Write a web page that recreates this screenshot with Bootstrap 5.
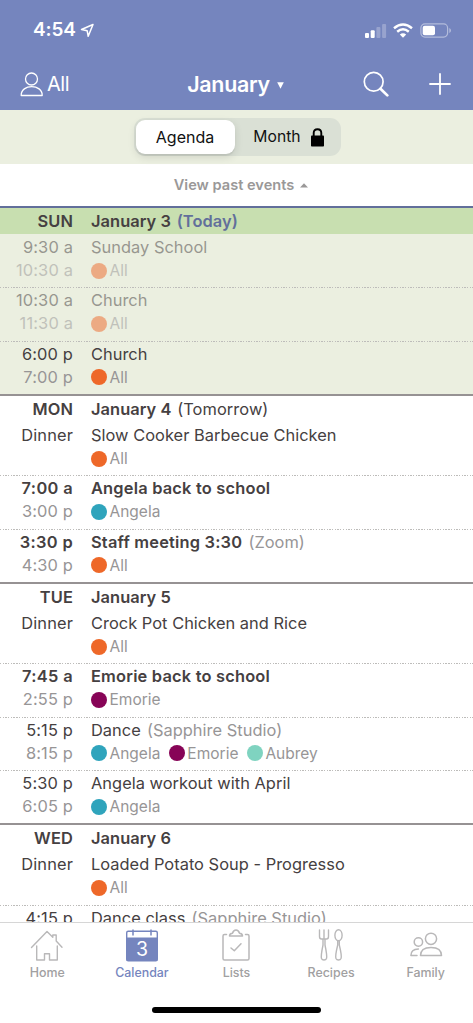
<!DOCTYPE html>
<html lang="en">
<head>
<meta charset="utf-8">
<meta name="viewport" content="width=device-width, initial-scale=1">
<title>Calendar</title>
<link href="https://cdn.jsdelivr.net/npm/bootstrap@5.3.0/dist/css/bootstrap.min.css" rel="stylesheet">
<style>
  body{font-family:Inter,"Liberation Sans",sans-serif;color:#454041;font-size:16.4px;overflow:hidden}
  svg{display:block;flex:none}
  .screen{height:1023px}
  .topbar{height:110px;background:#7585be;color:#fff}
  .status{height:60px;padding:1px 22px 0 33px}
  .clock{font-size:19px;font-weight:600;letter-spacing:-.15px}
  .titlebar{height:48px;padding:0 22px 0 20px;display:grid;grid-template-columns:1fr auto 1fr}
  .who{font-size:20px;letter-spacing:-.5px}
  .month-name{font-size:21.4px;font-weight:600;letter-spacing:-.3px}
  .segwrap{height:54px;background:#ebefe0}
  .seg{width:207px;height:38px;border-radius:11px;background:#dae0d5;color:#111;padding:2px;font-size:16px}
  .seg .on{width:99px;background:#fff;border-radius:9px;box-shadow:0 3px 8px rgba(0,0,0,.12),0 2px 1px rgba(0,0,0,.05)}
  .past{height:42px;font-size:14.6px;font-weight:600;color:#9a9898;padding:1px 0 0 7px}
  .day{border-top:2px solid #969293}
  .day.today{border-color:#626f9b;background:#ebefe0}
  .dayhead{height:26px;line-height:26px;font-weight:600;letter-spacing:.07px}
  .dayhead .what span{margin-left:1.5px}
  .today .dayhead{background:#c8dfb0}
  .when{width:73px;flex:none;text-align:right;letter-spacing:.15px}
  .what{padding-left:18px;white-space:nowrap}
  .event{height:53.35px;padding-top:2px;line-height:23px;position:relative}
  .event .what{letter-spacing:.03px}
  .event+.event{background:repeating-linear-gradient(90deg,#bdbcba 0 1.3px,transparent 1.3px 2.7px) 0 0/100% 1.3px no-repeat}
  .dim{color:#979596}
  .what>.dim{margin-left:1.5px}
  .gone>*{opacity:.5}
  .strong{font-weight:600;letter-spacing:.2px}
  .when .strong{letter-spacing:.35px}
  .person{display:inline-flex;align-items:center;gap:2.5px;margin-right:8.5px;font-size:15.5px;letter-spacing:0}
  .person::before{content:"";width:16px;height:16px;border-radius:50%;background:var(--c)}
  .all{--c:#ee6829}.angela{--c:#2fa4bc}.emorie{--c:#870457}.aubrey{--c:#7fd3c0}
  .tabs{height:101px;background:#fff;border-top:1px solid #d6d6d6;color:#a1a0a1;font-size:12.4px;font-weight:500}
  .tabs .tab{width:94.6px;padding-top:5px}
  .tabs .tab span{line-height:18px;margin-top:2px}
  .tabs .tab.active{color:#7585be}
  .homebar{width:169px;height:6px;background:#000;border-radius:3px;margin:0 auto 10px}
</style>
</head>
<body>
<div class="screen d-flex flex-column overflow-hidden">
  <header class="topbar flex-shrink-0">
    <div class="status d-flex align-items-center">
      <span class="clock">4:54</span>
      <svg class="ms-1" width="15" height="15" viewBox="0 0 15 15" fill="none" stroke="#fff" stroke-width="1.5" stroke-linejoin="round"><path d="M13 1.5 1.5 6.5 7.2 7.8 8.2 13.3Z"/></svg>
      <div class="d-flex align-items-center ms-auto">
        <svg width="22" height="15" viewBox="0 0 22 15" fill="#fff"><rect y="10" width="4" height="5" rx="1"/><rect x="5.7" y="7.3" width="4" height="7.7" rx="1"/><g opacity=".25"><rect x="11.4" y="4" width="4" height="11" rx="1"/><rect x="17.1" y="1" width="4" height="14" rx="1"/></g></svg>
        <svg style="margin-left:6px" width="20" height="15" viewBox="0 0 20 15" fill="none" stroke="#fff" stroke-width="2.5"><path d="M1 5.2Q10-2.2 19 5.2"/><path d="M4.2 8.7q5.8-4.8 11.6 0"/><path d="M6.8 11.4q3.2-2.5 6.4 0L10 14.7Z" fill="#fff" stroke="none"/></svg>
        <svg style="margin-left:7px;margin-right:-1px" width="32" height="15" viewBox="0 0 32 15"><rect x=".9" y=".9" width="26.7" height="13.2" rx="4" fill="none" stroke="#fff" stroke-opacity=".45" stroke-width="1.2"/><rect x="2.7" y="2.7" width="12.3" height="9.6" rx="2" fill="#fff"/><path d="M29.3 5v5q1.7-.8 1.7-2.5T29.3 5" fill="#fff" opacity=".45"/></svg>
      </div>
    </div>
    <div class="titlebar align-items-center">
      <div class="d-flex align-items-center who">
        <svg width="24" height="26" viewBox="0 0 24 26" fill="none" stroke="#fff" stroke-width="1.3"><circle cx="11.5" cy="8" r="6"/><path d="M1.2 24.5C.7 12.7 22.7 12.7 22.2 24.5Z" stroke-linejoin="round"/></svg>
        <span style="margin-left:3px">All</span>
      </div>
      <div class="d-flex align-items-center month-name">January<svg style="margin:3px 0 0 7px" width="7" height="7" viewBox="0 0 7 7" fill="#fff"><path d="M.2.3h6.6L3.5 6.8Z"/></svg></div>
      <div class="d-flex align-items-center justify-content-end">
        <svg style="margin-right:40px" width="26" height="26" viewBox="0 0 26 26" fill="none" stroke="#fff"><circle cx="10.7" cy="10.8" r="9.4" stroke-width="1.7"/><path d="M17.5 17.7 24.3 24.4" stroke-width="2.7" stroke-linecap="round"/></svg>
        <svg width="22" height="22" viewBox="0 0 22 22" stroke="#fff" stroke-width="1.8" stroke-linecap="round"><path d="M11 1v20M1 11h20"/></svg>
      </div>
    </div>
  </header>

  <div class="segwrap d-flex justify-content-center align-items-center flex-shrink-0">
    <div class="seg d-flex" style="margin-left:1px">
      <div class="on d-flex align-items-center justify-content-center">Agenda</div>
      <div class="flex-fill d-flex align-items-center justify-content-center ps-1" style="font-size:15.7px">Month
        <svg style="margin-left:10px" width="13" height="19" viewBox="0 0 13 19"><path d="M2.7 8V5Q2.7 1.2 6.5 1.2T10.3 5V8" fill="none" stroke="#000" stroke-width="1.9"/><rect y="7.5" width="13" height="11" rx=".8"/></svg>
      </div>
    </div>
  </div>
  <div class="past d-flex align-items-center justify-content-center flex-shrink-0">View past events<svg class="ms-1" style="position:relative;left:2px" width="8" height="5" viewBox="0 0 8 6" preserveAspectRatio="none" fill="#9a9898"><path d="M4 .3 8 5.5H0Z"/></svg></div>

  <main class="flex-fill overflow-hidden" style="min-height:0">
    <section class="day today">
      <div class="dayhead d-flex"><div class="when">SUN</div><div class="what">January 3 <span style="color:#626f9b">(Today)</span></div></div>
      <div class="event d-flex gone"><div class="when">9:30 a<br><span class="dim">10:30 a</span></div><div class="what">Sunday School<br><span class="person all"><span class="dim">All</span></span></div></div>
      <div class="event d-flex gone"><div class="when">10:30 a<br><span class="dim">11:30 a</span></div><div class="what">Church<br><span class="person all"><span class="dim">All</span></span></div></div>
      <div class="event d-flex"><div class="when">6:00 p<br><span class="dim">7:00 p</span></div><div class="what">Church<br><span class="person all"><span class="dim">All</span></span></div></div>
    </section>
    <section class="day">
      <div class="dayhead d-flex"><div class="when">MON</div><div class="what">January 4 <span class="fw-normal">(Tomorrow)</span></div></div>
      <div class="event d-flex"><div class="when">Dinner</div><div class="what">Slow Cooker Barbecue Chicken<br><span class="person all"><span class="dim">All</span></span></div></div>
      <div class="event d-flex"><div class="when"><span class="strong">7:00 a</span><br><span class="dim">3:00 p</span></div><div class="what"><span class="strong">Angela back to school</span><br><span class="person angela"><span class="dim">Angela</span></span></div></div>
      <div class="event d-flex"><div class="when"><span class="strong">3:30 p</span><br><span class="dim">4:30 p</span></div><div class="what"><span class="strong">Staff meeting 3:30</span> <span class="dim">(Zoom)</span><br><span class="person all"><span class="dim">All</span></span></div></div>
    </section>
    <section class="day">
      <div class="dayhead d-flex"><div class="when">TUE</div><div class="what">January 5</div></div>
      <div class="event d-flex"><div class="when">Dinner</div><div class="what">Crock Pot Chicken and Rice<br><span class="person all"><span class="dim">All</span></span></div></div>
      <div class="event d-flex"><div class="when"><span class="strong">7:45 a</span><br><span class="dim">2:55 p</span></div><div class="what"><span class="strong">Emorie back to school</span><br><span class="person emorie"><span class="dim">Emorie</span></span></div></div>
      <div class="event d-flex"><div class="when">5:15 p<br><span class="dim">8:15 p</span></div><div class="what">Dance <span class="dim">(Sapphire Studio)</span><br><span class="person angela"><span class="dim">Angela</span></span><span class="person emorie"><span class="dim">Emorie</span></span><span class="person aubrey"><span class="dim">Aubrey</span></span></div></div>
      <div class="event d-flex"><div class="when">5:30 p<br><span class="dim">6:05 p</span></div><div class="what">Angela workout with April<br><span class="person angela"><span class="dim">Angela</span></span></div></div>
    </section>
    <section class="day">
      <div class="dayhead d-flex"><div class="when">WED</div><div class="what">January 6</div></div>
      <div class="event d-flex"><div class="when">Dinner</div><div class="what">Loaded Potato Soup - Progresso<br><span class="person all"><span class="dim">All</span></span></div></div>
      <div class="event d-flex"><div class="when">4:15 p</div><div class="what">Dance class <span class="dim">(Sapphire Studio)</span></div></div>
    </section>
  </main>

  <nav class="tabs d-flex flex-column flex-shrink-0">
    <div class="d-flex flex-fill">
      <div class="tab d-flex flex-column align-items-center">
        <svg width="34" height="34" viewBox="0 0 34 34" fill="none" stroke="#b9b8b9" stroke-width="1.4" stroke-linejoin="round" stroke-linecap="round"><path d="M1.5 19.5 17 3.5 22.8 9.3V7H26.2V13L32 19.2M6.7 18V32H14.5V25.8H19.5V32H27.3V18"/></svg>
        <span>Home</span>
      </div>
      <div class="tab active d-flex flex-column align-items-center">
        <svg width="34" height="34" viewBox="0 0 34 34"><rect x="1.7" y="3.2" width="30.6" height="29.6" rx="1.5" fill="#fff" stroke="#7585be" stroke-width="1.4"/><path d="M1.5 9.5h31V32a1 1 0 0 1-1 1h-29a1 1 0 0 1-1-1Z" fill="#7585be"/><path d="M8 1.5v6M26 1.5v6" stroke="#7585be" stroke-width="1.5"/><text x="17" y="28" text-anchor="middle" font-size="19.5" font-weight="400" fill="#fff">3</text></svg>
        <span>Calendar</span>
      </div>
      <div class="tab d-flex flex-column align-items-center">
        <svg width="34" height="34" viewBox="0 0 34 34" fill="none" stroke="#b9b8b9" stroke-width="1.5" stroke-linecap="round" stroke-linejoin="round"><path d="M7.5 6.5H5.5Q4 6.5 4 8V30.5Q4 32 5.5 32H28.5Q30 32 30 30.5V8Q30 6.5 28.5 6.5H26.5"/><path d="M10.5 8Q10.5 5.5 13.5 5.2Q14.5 2 17 2T20.5 5.2Q23.5 5.5 23.5 8Z"/><path d="M12 20 15.3 22.8 22 15.8"/></svg>
        <span>Lists</span>
      </div>
      <div class="tab d-flex flex-column align-items-center">
        <svg width="34" height="34" viewBox="0 0 34 34" fill="none" stroke="#b9b8b9" stroke-width="1.4" stroke-linecap="round" stroke-linejoin="round"><path d="M5.5 2V8.5Q5.5 11 7.5 11H12.5Q14.5 11 14.5 8.5V2M10 2V11M9 11.5V17Q6.7 28 7.5 30.5Q8.1 32 10 32T12.5 30.5Q13.3 28 11 17V11.5"/><ellipse cx="24.5" cy="7.2" rx="3.6" ry="5.5"/><path d="M23.7 13V17Q21 28 22 30.5Q22.7 32 24.5 32T27 30.5Q28 28 25.3 17V13"/></svg>
        <span>Recipes</span>
      </div>
      <div class="tab d-flex flex-column align-items-center">
        <svg width="34" height="34" viewBox="0 0 34 34" fill="none" stroke="#b9b8b9" stroke-width="1.5" stroke-linecap="round" stroke-linejoin="round"><circle cx="22" cy="10.8" r="5.6"/><path d="M11.5 27.6Q11.5 19.4 22 19.4T32.5 27.6Z"/><circle cx="9.4" cy="14" r="4.2"/><path d="M8 27.6H1.9Q1.9 21.4 9.4 21.1"/></svg>
        <span>Family</span>
      </div>
    </div>
    <div class="homebar"></div>
  </nav>
</div>
<script src="https://cdn.jsdelivr.net/npm/bootstrap@5.3.0/dist/js/bootstrap.bundle.min.js"></script>
</body>
</html>
